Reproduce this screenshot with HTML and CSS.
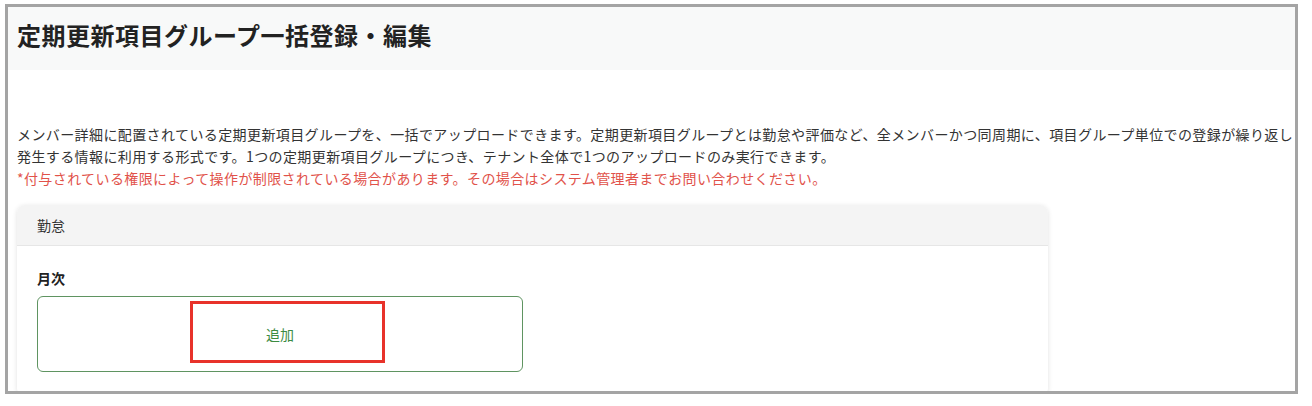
FILE: index.html
```html
<!DOCTYPE html>
<html lang="ja">
<head>
<meta charset="utf-8">
<title>定期更新項目グループ一括登録・編集</title>
<link rel="stylesheet" href="styles.css">
</head>
<body>
<div class="frame">
  <header class="page-header">
    <h1 class="page-title">定期更新項目グループ一括登録・編集</h1>
  </header>
  <main class="content">
    <p class="desc"><span class="line">メンバー詳細に配置されている定期更新項目グループを、一括でアップロードできます。定期更新項目グループとは勤怠や評価など、全メンバーかつ同周期に、項目グループ単位での登録が繰り返し</span><span class="line">発生する情報に利用する形式です。1つの定期更新項目グループにつき、テナント全体で1つのアップロードのみ実行できます。</span><span class="line warn">*付与されている権限によって操作が制限されている場合があります。その場合はシステム管理者までお問い合わせください。</span></p>
    <section class="card">
      <div class="card-header">勤怠</div>
      <div class="card-body">
        <div class="group-label">月次</div>
        <div class="add-box">
          <span class="add-text">追加</span>
          <span class="highlight"></span>
        </div>
      </div>
    </section>
  </main>
</div>
</body>
</html>
```
FILE: styles.css
```css
* { box-sizing: border-box; }
html, body { margin: 0; padding: 0; background: #ffffff; }
body {
  font-family: "Noto Sans CJK JP", "Noto Sans", sans-serif;
  color: #333333;
  font-size: 14px;
}
.frame {
  margin: 4px 0 0 5px;
  width: 1293px;
  height: 390px;
  border: 3px solid #a4a4a4;
  overflow: hidden;
  background: #ffffff;
}
.page-header {
  height: 63px;
  background: #f8f9f9;
  padding: 10px 0 0 9px;
}
.page-title {
  margin: 0;
  font-size: 24px;
  line-height: 36px;
  font-weight: 700;
  letter-spacing: 0.5px;
  color: #222222;
}
.content {
  padding: 0 0 0 9px;
}
.desc {
  margin: 53px 0 0 0;
  line-height: 22px;
  font-size: 14px;
  letter-spacing: 0.4px;
  color: #333333;
}
.line {
  display: block;
  white-space: nowrap;
}
.warn { color: #e1524a; }
.card {
  margin-top: 16px;
  width: 1031px;
  border-radius: 8px;
  background: #ffffff;
  box-shadow: 0 1px 5px rgba(0, 0, 0, 0.12);
  overflow: hidden;
}
.card-header {
  height: 41px;
  background: #f4f4f4;
  border-bottom: 1px solid #e6e6e6;
  padding: 0 0 0 20px;
  line-height: 40px;
  font-size: 14px;
  color: #333333;
}
.card-body {
  padding: 21px 20px 24px 20px;
}
.group-label {
  font-weight: 700;
  line-height: 22px;
  font-size: 14px;
  color: #222222;
}
.add-box {
  position: relative;
  margin-top: 7px;
  width: 486px;
  height: 76px;
  border: 1px solid #5f9461;
  border-radius: 6px;
  display: flex;
  align-items: center;
  justify-content: center;
}
.add-text {
  color: #3d8c42;
  font-size: 14px;
}
.highlight {
  position: absolute;
  left: 152px;
  top: 4px;
  width: 195px;
  height: 62px;
  border: 3px solid #e8322a;
}
```
